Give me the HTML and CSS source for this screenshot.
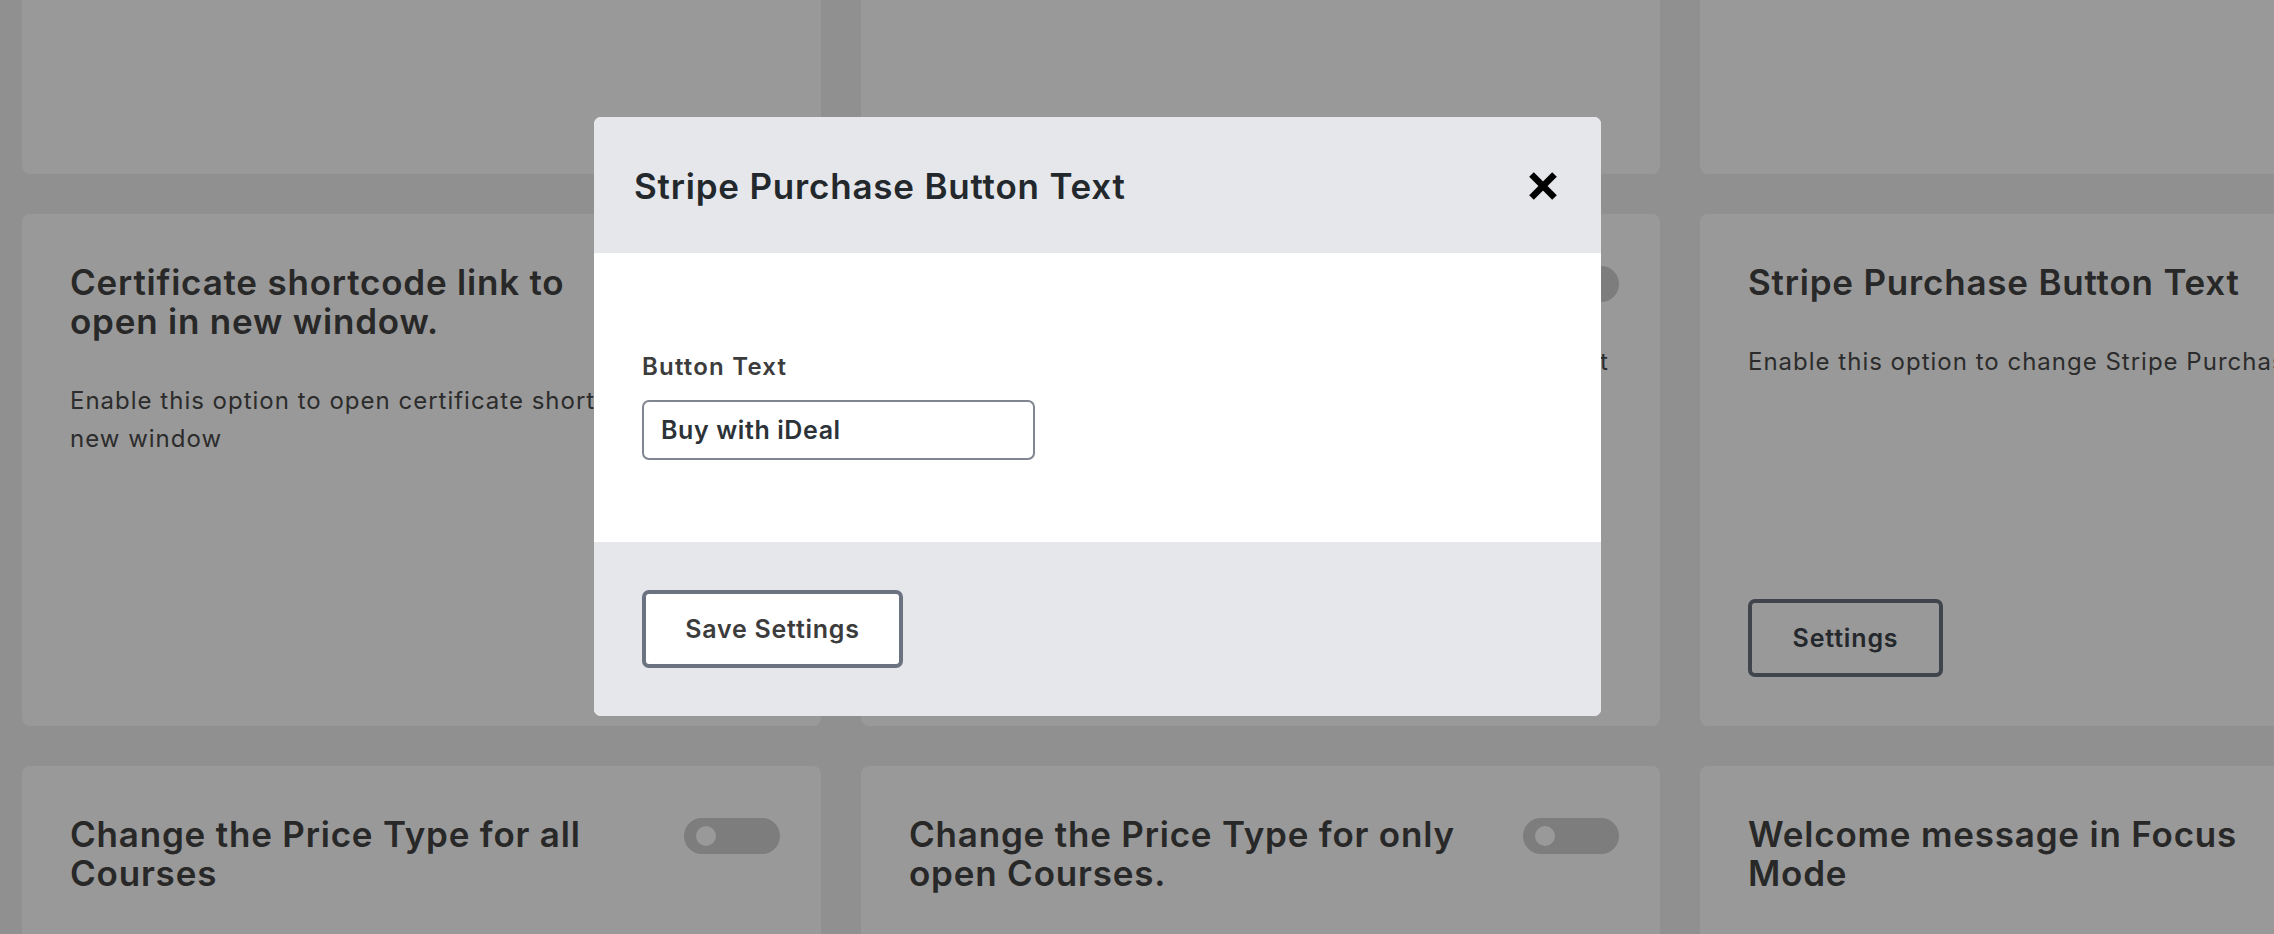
FILE: index.html
```html
<!DOCTYPE html>
<html lang="en">
<head>
<meta charset="utf-8">
<title>Settings</title>
<link rel="stylesheet" href="styles.css">
</head>
<body>
<main class="page">
  <div class="grid">
    <section class="card"></section>
    <section class="card"></section>
    <section class="card"></section>

    <section class="card">
      <div class="card-head">
        <h3 class="card-title">Certificate shortcode link to open in new window.</h3>
        <span class="toggle"><span class="knob"></span></span>
      </div>
      <p class="card-desc">Enable this option to open certificate shortcode link in a new window</p>
    </section>
    <section class="card">
      <div class="card-head">
        <h3 class="card-title">Stripe Purchase Button Text</h3>
        <span class="toggle"><span class="knob"></span></span>
      </div>
      <p class="card-desc">Enable this option to change Stripe Purchase Button Text</p>
      <button class="btn-outline" type="button">Settings</button>
    </section>
    <section class="card">
      <div class="card-head">
        <h3 class="card-title">Stripe Purchase Button Text</h3>
        <span class="toggle"><span class="knob"></span></span>
      </div>
      <p class="card-desc">Enable this option to change Stripe Purchase Button Text</p>
      <button class="btn-outline" type="button">Settings</button>
    </section>

    <section class="card">
      <div class="card-head">
        <h3 class="card-title">Change the Price Type for all Courses</h3>
        <span class="toggle"><span class="knob"></span></span>
      </div>
    </section>
    <section class="card">
      <div class="card-head">
        <h3 class="card-title">Change the Price Type for only open Courses.</h3>
        <span class="toggle"><span class="knob"></span></span>
      </div>
    </section>
    <section class="card">
      <div class="card-head">
        <h3 class="card-title">Welcome message in Focus Mode</h3>
        <span class="toggle"><span class="knob"></span></span>
      </div>
    </section>
  </div>
</main>

<div class="overlay"></div>

<div class="modal" role="dialog" aria-labelledby="modal-title">
  <header class="modal-head">
    <h2 class="modal-title" id="modal-title">Stripe Purchase Button Text</h2>
    <button class="modal-close" type="button" aria-label="Close">
      <svg viewBox="0 0 30 30" width="30" height="30" aria-hidden="true">
        <line x1="3.5" y1="3.5" x2="26.5" y2="26.5" stroke="#000" stroke-width="6.5"/>
        <line x1="26.5" y1="3.5" x2="3.5" y2="26.5" stroke="#000" stroke-width="6.5"/>
      </svg>
    </button>
  </header>
  <div class="modal-body">
    <label class="field-label" for="btn-text">Button Text</label>
    <input class="field-input" id="btn-text" type="text" value="Buy with iDeal">
  </div>
  <footer class="modal-foot">
    <button class="btn-save" type="button">Save Settings</button>
  </footer>
</div>
</body>
</html>
```

FILE: styles.css
```css
* { box-sizing: border-box; }

html, body {
  margin: 0;
  padding: 0;
}

body {
  background: #f0f0f0;
  font-family: Inter, "Noto Sans", sans-serif;
  color: #444;
  overflow: hidden;
  height: 934px;
}

.page {
  padding-left: 22px;
}

.grid {
  display: grid;
  grid-template-columns: repeat(3, 799px);
  grid-auto-rows: 512px;
  gap: 40px;
  margin-top: -338px;
  width: max-content;
}

.card {
  background: #fff;
  border-radius: 8px;
  padding: 49px 41px 49px 48px;
  display: flex;
  flex-direction: column;
  align-items: flex-start;
}

.card-head {
  display: flex;
  align-items: flex-start;
  justify-content: space-between;
  width: 100%;
}

.card-title {
  margin: 0 48px 0 0;
  flex: 1;
  font-size: 35px;
  line-height: 39px;
  letter-spacing: 0.8px;
  font-weight: 600;
  color: #444;
}

.toggle {
  flex: none;
  width: 96px;
  height: 36px;
  margin-top: 3px;
  border-radius: 18px;
  background: #d0d0d0;
  display: flex;
  align-items: center;
  padding-left: 12px;
}

.knob {
  width: 20px;
  height: 20px;
  border-radius: 50%;
  background: #fff;
}

.card-desc {
  margin: 41px 0 0;
  font-size: 24px;
  line-height: 37.7px;
  letter-spacing: 1px;
  font-weight: 400;
  color: #4a4a4a;
}

.btn-outline {
  margin-top: auto;
  width: 195px;
  height: 78px;
  border: 4px solid #6b7280;
  border-radius: 7px;
  background: #fff;
  font-family: Inter, "Noto Sans", sans-serif;
  font-size: 25px;
  letter-spacing: 0.85px;
  font-weight: 600;
  color: #3c434a;
  padding: 0;
}

.overlay {
  position: fixed;
  inset: 0;
  background: rgba(0, 0, 0, 0.4);
}

.modal {
  position: fixed;
  left: 594px;
  top: 117px;
  width: 1007px;
  border-radius: 7px;
  overflow: hidden;
  background: #fff;
  display: flex;
  flex-direction: column;
}

.modal-head {
  height: 136px;
  background: #e6e7eb;
  display: flex;
  align-items: center;
  justify-content: space-between;
  padding: 2px 43px 0 40px;
}

.modal-title {
  margin: 0;
  font-size: 35px;
  line-height: 39px;
  letter-spacing: 0.8px;
  font-weight: 600;
  color: #23282d;
}

.modal-close {
  border: 0;
  background: none;
  padding: 0;
  width: 30px;
  height: 30px;
  display: block;
}

.modal-close svg { display: block; }

.modal-body {
  background: #fff;
  padding: 97px 48px 82px;
  display: flex;
  flex-direction: column;
  align-items: flex-start;
}

.field-label {
  font-size: 24px;
  line-height: 34.5px;
  letter-spacing: 1.2px;
  font-weight: 600;
  color: #3c3c3c;
}

.field-input {
  margin-top: 15px;
  width: 393px;
  height: 60px;
  border: 2px solid #80858f;
  border-radius: 7px;
  padding: 0 17px;
  font-family: Inter, "Noto Sans", sans-serif;
  font-size: 25px;
  letter-spacing: 0.6px;
  font-weight: 600;
  color: #2c3338;
  background: #fff;
  outline: none;
}

.modal-foot {
  background: #e6e7eb;
  padding: 48px;
  display: flex;
}

.btn-save {
  width: 261px;
  height: 78px;
  border: 4px solid #6b7280;
  border-radius: 7px;
  background: #fff;
  font-family: Inter, "Noto Sans", sans-serif;
  font-size: 25px;
  letter-spacing: 0.75px;
  font-weight: 600;
  color: #3c3c3c;
  padding: 0;
}
```
